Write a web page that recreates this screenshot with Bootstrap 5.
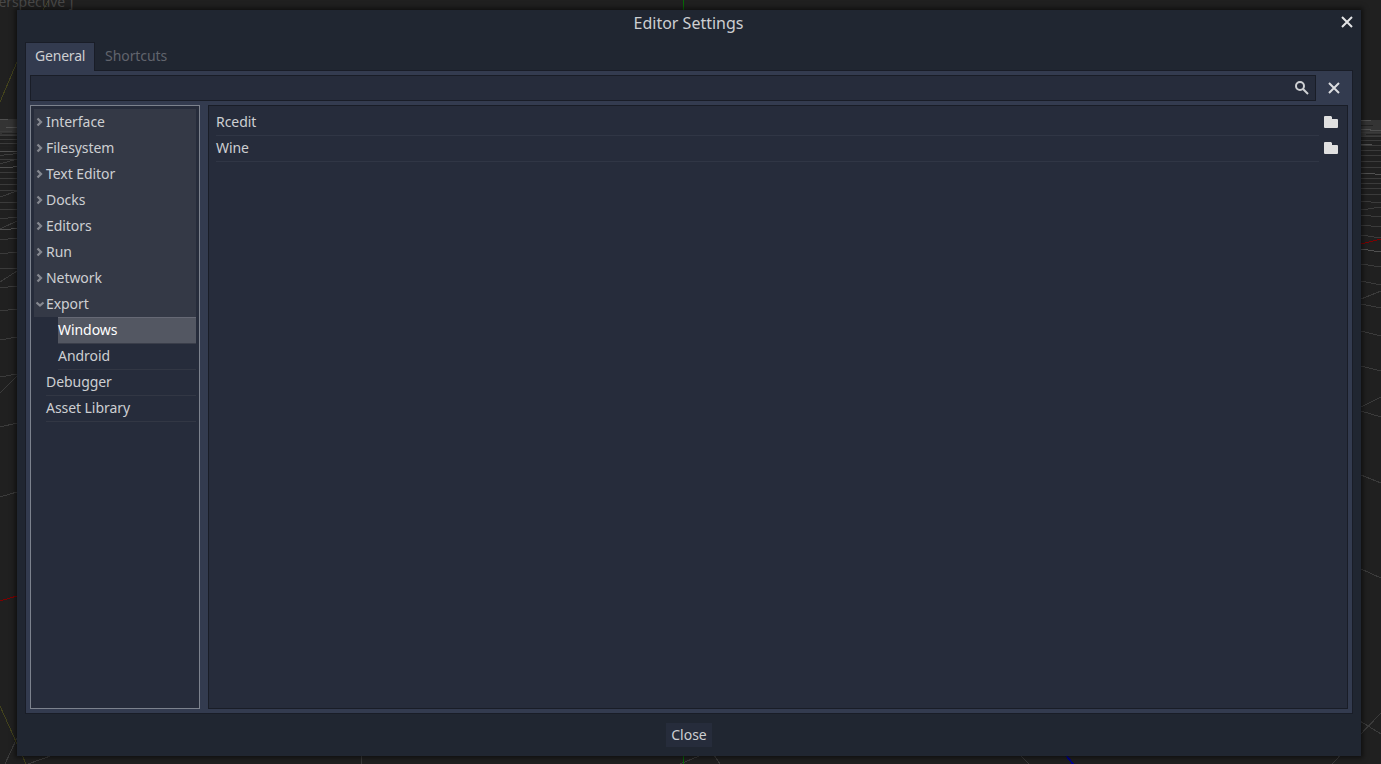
<!DOCTYPE html>
<html lang="en">
<head>
<meta charset="utf-8">
<title>Editor Settings</title>
<link rel="stylesheet" href="https://cdn.jsdelivr.net/npm/bootstrap@5.3.0/dist/css/bootstrap.min.css">
<style>
body{width:1381px;height:764px;background:#202020;font:14px/26px "Noto Sans",sans-serif;letter-spacing:-.06px;color:#cdcfd2;padding:10px 20px 8px 17px}
.viewport{left:0;top:0;z-index:0}
.dialog{z-index:1;background:#202631;box-shadow:0 0 5px 2px rgba(0,0,0,.55);padding:0 8px 9px}
.title-row{height:32px;font-size:16px;line-height:27px;letter-spacing:0;padding-right:1px}
.title-row svg{right:0;top:6px}
.tabs{height:29px;margin-bottom:-1px;z-index:2}
.tab-on{width:70px;background:#333b4f;border:1px solid #191d27;border-bottom:0;padding-left:9px;letter-spacing:-.2px}
.tab-off{padding:0 0 0 10px;color:#61646d;line-height:28px}
.pane{background:#333b4f;border:1px solid #191d27;padding:4px;height:644px}
.inset{background:#262c3b;border:1px solid #191d27}
.search{height:26px;padding:0 6px 1px 0}
.clear-btn{width:32px;padding-left:4px}
.tree{width:170px;border-color:#7c828d;padding:3px}
.tree-row{height:26px}
.group-row{background:#343946;padding-left:2px}
.arrow{width:10px;height:10px}
.leaf{margin-left:12px;border-bottom:1px solid #323744;height:26px;position:relative;top:1px}
.child{margin-left:24px}
.picked{background:#535762;border-top:1px solid #666975;border-bottom-color:#3a3e4a;color:#fff;line-height:24px;top:0;height:27px;margin-bottom:-1px}
.leaf span{position:relative;top:-1px}
.props{margin-left:8px;padding:3px 8px 0 7px}
.prop{height:26px}
.prop-name{border-bottom:1px solid #303645;height:27px;margin-right:4px}
.close-btn{width:46px;height:24px;background:#262c3b;line-height:24px;color:#cdcfd2;font-size:14px;margin-top:9px}
</style>
</head>
<body class="position-relative overflow-hidden">
<svg class="viewport position-absolute" width="1381" height="764" fill="none" shape-rendering="crispEdges" stroke="#3b3b3b">
  <path fill="#343434" stroke="none" d="M0 119h30v16H0zM1350 120h31v16h-31z"/>
  <path stroke="#505050" d="M0 119.500h8M6 127.500h12M1361 120.500h10M1361 129.500h10M1370 130.500h11M0 151.500h17M0 167.500h8l10-1M1361 144.500h11M1361 173.500h8l12 1M0 229.500h6l11-1M1361 249l20 3"/>
  <path stroke="#222" d="M2 133.500h15M0 137.500h10M4 141.500h13M0 146.500h17M0 149.500h10M1361 125.500h12M1366 134.500h15M1361 138.500h20M1361 142.500h10M1361 147.500h20"/>
  <path d="M0 131.500h12M0 135.500h17M0 139.500h17M0 143.500h17M0 155.500l17-2M0 159.500h17M0 164l17-5M0 172.500h17M0 178.500h17M0 184.500h17M0 191l17-1M0 197l17-6M0 203l17-1M0 210l17-1M0 219l17-2M0 229l17-8M0 240l17-2M0 254l17-2M0 269l17-1M0 282l17-11M0 288l17-2M0 311l17-2M0 340l17-3M0 377l17-3M0 427l17-4M0 497l17-5"/>
  <path d="M1361 132.500h20M1361 136.500h20M1361 140.500h20M1361 145.500h20M1361 150.500h20M1361 155.500h20M1361 161l20 1M1361 167l20 1M1361 178l20 1M1361 183l20 1M1361 188h20M1361 194l20 1M1361 201l20 2M1361 210l20-3M1361 215l20 2M1361 225l20 2M1361 235l20 3M1361 264l20 3M1361 281l20 4M1361 299l20-8M1361 304l20 4M1361 331l20 5M1361 366l20 5M1361 407l20-10M1361 411l20 6M1361 475l20 8M1361 569l20 9M1360 721l21 13M1332 764l49-51M5 764l12-26M28 764l28-10M680 764l24-10M712 752l8 12M361 752v12M1021 756l8 8M0 393l17-17"/>
  <path stroke="#42421c" d="M0 102L17 62M43 10L49 0M0 706l26 58"/>
  <path stroke="#7d0000" d="M0 601l17-5M1361 244l20-5"/>
  <path stroke="#056b05" d="M683.500 0v10M683.500 755v9"/>
  <path stroke="#00008c" stroke-width="2" d="M1065 754l8 10"/>
  <text x="-10" y="7" fill="#484848" stroke="none" font-size="14" shape-rendering="auto">Perspective ]</text>
</svg>
<main class="dialog position-relative d-flex flex-column h-100">
  <header class="title-row position-relative text-center">Editor Settings
    <svg class="position-absolute" width="12" height="12" fill="none" stroke="#e3e4e6" stroke-width="2"><path d="M1 1l10 10M11 1L1 11"/></svg>
  </header>
  <nav class="tabs position-relative d-flex"><div class="tab-on">General</div><div class="tab-off">Shortcuts</div></nav>
  <section class="pane d-flex flex-column">
    <div class="d-flex">
      <div class="inset search flex-grow-1 d-flex align-items-center justify-content-end">
        <svg width="15" height="15" fill="none" stroke="#cfd1d4" stroke-width="2"><circle cx="6" cy="6" r="4"/><path d="M9 9l5 5"/></svg>
      </div>
      <div class="clear-btn d-flex align-items-center justify-content-center"><svg width="12" height="12" fill="none" stroke="#dcdde0" stroke-width="2"><path d="M1 1l10 10M11 1L1 11"/></svg></div>
    </div>
    <div class="d-flex flex-grow-1 mt-1">
      <aside class="inset tree">
        <div class="tree-row group-row d-flex align-items-center"><svg class="arrow" fill="none" stroke="#858890" stroke-width="2.300"><path d="M1.500 1.500L5 5 1.500 8.500"/></svg>Interface</div>
        <div class="tree-row group-row d-flex align-items-center"><svg class="arrow" fill="none" stroke="#858890" stroke-width="2.300"><path d="M1.500 1.500L5 5 1.500 8.500"/></svg>Filesystem</div>
        <div class="tree-row group-row d-flex align-items-center"><svg class="arrow" fill="none" stroke="#858890" stroke-width="2.300"><path d="M1.500 1.500L5 5 1.500 8.500"/></svg>Text Editor</div>
        <div class="tree-row group-row d-flex align-items-center"><svg class="arrow" fill="none" stroke="#858890" stroke-width="2.300"><path d="M1.500 1.500L5 5 1.500 8.500"/></svg>Docks</div>
        <div class="tree-row group-row d-flex align-items-center"><svg class="arrow" fill="none" stroke="#858890" stroke-width="2.300"><path d="M1.500 1.500L5 5 1.500 8.500"/></svg>Editors</div>
        <div class="tree-row group-row d-flex align-items-center"><svg class="arrow" fill="none" stroke="#858890" stroke-width="2.300"><path d="M1.500 1.500L5 5 1.500 8.500"/></svg>Run</div>
        <div class="tree-row group-row d-flex align-items-center"><svg class="arrow" fill="none" stroke="#858890" stroke-width="2.300"><path d="M1.500 1.500L5 5 1.500 8.500"/></svg>Network</div>
        <div class="tree-row group-row d-flex align-items-center"><svg class="arrow" fill="none" stroke="#858890" stroke-width="2.300"><path d="M.5 3.500L4 6.500l3.500-3"/></svg>Export</div>
        <div class="leaf child picked">Windows</div>
        <div class="leaf child"><span>Android</span></div>
        <div class="leaf"><span>Debugger</span></div>
        <div class="leaf"><span>Asset Library</span></div>
      </aside>
      <section class="inset props flex-grow-1">
        <div class="prop d-flex"><div class="prop-name flex-grow-1">Rcedit</div><svg width="16" height="26" fill="#e0e0e0"><path d="M1 8q0-1 1-1h6l1 1v2h5q1 0 1 1v7q0 1-1 1H2q-1 0-1-1z"/></svg></div>
        <div class="prop d-flex"><div class="prop-name flex-grow-1">Wine</div><svg width="16" height="26" fill="#e0e0e0"><path d="M1 8q0-1 1-1h6l1 1v2h5q1 0 1 1v7q0 1-1 1H2q-1 0-1-1z"/></svg></div>
      </section>
    </div>
  </section>
  <button class="close-btn btn rounded-0 border-0 p-0 align-self-center" type="button">Close</button>
</main>
<script src="https://cdn.jsdelivr.net/npm/bootstrap@5.3.0/dist/js/bootstrap.bundle.min.js"></script>
</body>
</html>
